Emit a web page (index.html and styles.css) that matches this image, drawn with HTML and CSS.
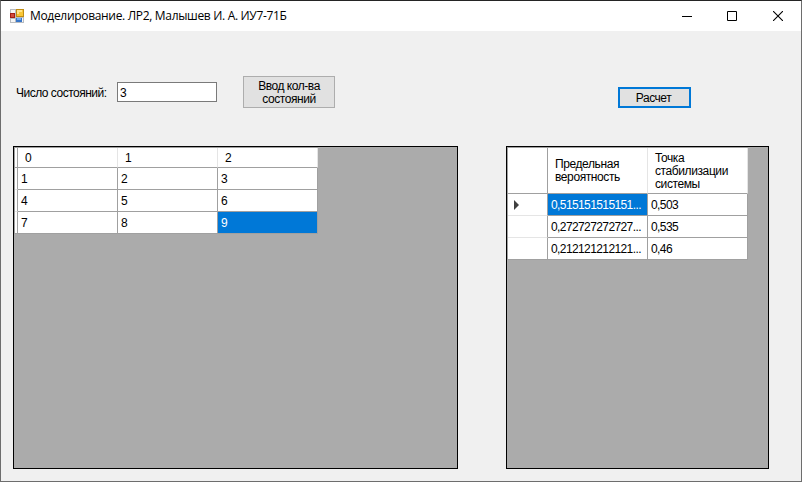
FILE: index.html
```
<!DOCTYPE html>
<html lang="ru">
<head>
<meta charset="utf-8">
<title>Моделирование</title>
<link rel="stylesheet" href="styles.css">
</head>
<body>
<div class="window">
  <header class="titlebar">
    <svg class="app-icon" width="14" height="14" viewBox="0 0 14 14">
      <rect width="14" height="14" fill="#b9bcc0"/>
      <path d="M1 1h4v3H1zM1 10h4v3H1zM12 9h1v4h-1z" fill="#f5f5f5"/>
      <rect x="0" y="4" width="5" height="5" fill="#a51d12"/><rect x="1" y="5" width="3" height="3" fill="#d04a3c"/>
      <rect x="6" y="0" width="8" height="8" fill="#c08c12"/><rect x="7" y="1" width="6" height="6" fill="#f8c636"/><path d="M7 1h5v2H9v2H7z" fill="#ffe38a"/>
      <rect x="6" y="9" width="6" height="4" fill="#3775c8"/><rect x="7" y="9" width="4" height="2" fill="#76adf0"/>
    </svg>
    <h1 class="title">Моделирование. ЛР2, Малышев И. А. ИУ7-71Б</h1>
    <div class="controls">
      <svg width="10" height="10" viewBox="0 0 10 10"><path d="M0 5.5h10" stroke="#000"/></svg>
      <svg width="10" height="10" viewBox="0 0 10 10"><path d="M.5.5h9v9h-9z" fill="none" stroke="#000"/></svg>
      <svg width="10" height="10" viewBox="0 0 10 10"><path d="M0 0l10 10M10 0L0 10" stroke="#000" stroke-width="1.1"/></svg>
    </div>
  </header>
  <main>
    <div class="toolbar">
      <label class="label" for="count">Число состояний:</label>
      <input class="field" id="count" value="3">
      <button class="button enter">Ввод кол-ва<br>состояний</button>
      <button class="button calc">Расчет</button>
    </div>
    <div class="grids">
      <section class="panel matrix">
        <div class="grid">
          <div class="h rh"></div><div class="h">0</div><div class="h">1</div><div class="h">2</div>
          <div class="rh"></div><div class="c">1</div><div class="c">2</div><div class="c">3</div>
          <div class="rh"></div><div class="c">4</div><div class="c">5</div><div class="c">6</div>
          <div class="rh"></div><div class="c">7</div><div class="c">8</div><div class="c selected">9</div>
        </div>
      </section>
      <section class="panel results">
        <div class="grid">
          <div class="h rh"></div><div class="h"><span>Предельная</span><span>вероятность</span></div><div class="h"><span>Точка</span><span>стабилизации</span><span>системы</span></div>
          <div class="rh"><svg width="5" height="10" viewBox="0 0 5 10"><path d="M0 0l5 5-5 5z" fill="#404040"/></svg></div><div class="c selected">0,515151515151...</div><div class="c">0,503</div>
          <div class="rh"></div><div class="c">0,272727272727...</div><div class="c">0,535</div>
          <div class="rh"></div><div class="c">0,212121212121...</div><div class="c">0,46</div>
        </div>
      </section>
    </div>
  </main>
</div>
</body>
</html>
```
FILE: styles.css
```
* { box-sizing: border-box; }
body { margin: 0; overflow: hidden; }
.window {
  width: 802px; height: 482px;
  border: 1px solid #6d6d6d; border-top-color: #242424;
  background: #f0f0f0; color: #000;
  font: 12px/13px "Liberation Sans", Arial, sans-serif;
  letter-spacing: -0.45px;
}
.titlebar { display: flex; align-items: center; height: 30px; background: #fff; padding: 0 18px 0 9px; }
.title { margin: 0 0 0 6px; font: 12px/16px "Open Sans", "Noto Sans", sans-serif; letter-spacing: -0.32px; white-space: nowrap; }
.controls { display: flex; gap: 35px; margin-left: auto; }
.controls svg:last-child { margin-left: 1px; }
svg { display: block; flex: none; }
.toolbar { display: flex; align-items: center; height: 32px; margin: 45px 0 0 15px; }
.label { width: 101px; white-space: nowrap; padding-top: 2px; letter-spacing: -0.5px; }
.field { width: 100px; height: 20px; border: 1px solid #7a7a7a; padding: 2px 2px 0; font: inherit; background: #fff; color: #000; }
.button { font: inherit; letter-spacing: inherit; color: #000; padding: 1px 0 0; background: #e1e1e1; border: 1px solid #adadad; }
.enter { width: 92px; height: 32px; margin-left: 26px; }
.calc { width: 73px; height: 21px; margin: 10px 0 0 283px; padding: 2px 2px 0 0; border: 2px solid #0078d7; }
.grids { display: flex; gap: 48px; margin: 38px 0 0 12px; }
.panel { height: 323px; background: #ababab; border: 1px solid #000; }
.matrix { width: 445px; }
.results { width: 263px; }
.grid { display: grid; width: max-content; border: solid #a0a0a0; border-width: 1px 0 0 1px; }
.matrix .grid { grid-template-columns: 3px 100px 100px 100px; grid-template-rows: 20px 22px 22px 22px; }
.results .grid { grid-template-columns: 40px 100px 100px; grid-template-rows: 46px 22px 22px 22px; }
.grid > div { display: flex; align-items: center; background: #fff; border: solid #a0a0a0; border-width: 0 1px 1px 0; padding-top: 2px; white-space: nowrap; }
.grid > .h { flex-direction: column; justify-content: center; align-items: flex-start; padding-left: 7px; border-right-color: #e5e5e5; letter-spacing: -0.4px; }
.results .grid > .h { padding-top: 1px; }
.grid > .rh { padding: 0 0 0 6px; border-bottom-color: #e5e5e5; }
.matrix .grid > .rh { padding: 0; }
.grid > .h.rh { border-color: #a0a0a0; }
.grid > .rh:nth-last-child(-n+4) { border-bottom-color: #a0a0a0; }
.grid > .c { padding-left: 3px; letter-spacing: -0.6px; }
.grid > .selected { background: #0078d7; color: #fff; }
```
